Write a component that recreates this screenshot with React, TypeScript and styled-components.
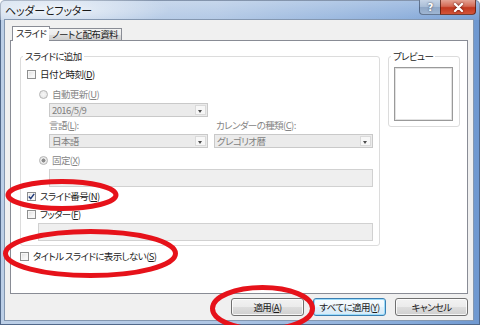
import styled, { createGlobalStyle, css } from "styled-components";

interface CheckProps {
	checked?: boolean;
	disabled?: boolean;
}

function CheckBox({ checked, disabled }: CheckProps) {
	return (
		<Box $disabled={disabled}>
			{checked && (
				<svg width="7" height="7" viewBox="0 0 7 7">
					<path d="M0.8 3.6 L2.7 5.6 L6.2 0.9" fill="none" stroke="#1f3a7a" strokeWidth="1.5" />
				</svg>
			)}
		</Box>
	);
}

function Radio({ checked, disabled }: CheckProps) {
	return <RadioDot $checked={checked} $disabled={disabled} />;
}

function Select({ value }: { value: string }) {
	return (
		<SelectBox>
			<span className="select__value">{value}</span>
			<span className="select__arrow" />
		</SelectBox>
	);
}

export default function App() {
	return (
		<>
			<GlobalStyle />
			<Window>
				<TitleBar>
					<Title>ヘッダーとフッター</Title>
					<Caption>
						<HelpButton>?</HelpButton>
						<CloseButton>
							<svg width="11" height="9" viewBox="0 0 11 9">
								<path d="M2 1 L9 8 M9 1 L2 8" stroke="#fff" strokeWidth="2.2" strokeLinecap="round" />
							</svg>
						</CloseButton>
					</Caption>
				</TitleBar>

				<Client>
					<TabStrip>
						<Tab $active>スライド</Tab>
						<Tab>ノートと配布資料</Tab>
					</TabStrip>

					<Panel>
						<Group>
							<Legend>スライドに追加</Legend>
							<Stack>
								<Row $top={6}>
									<CheckBox />
									<span>
										日付と時刻(<u>D</u>)
									</span>
								</Row>
								<Row $top={8} $indent={12} $disabled>
									<Radio disabled />
									<span>
										自動更新(<u>U</u>)
									</span>
								</Row>
								<DateField>
									<Select value="2016/5/9" />
								</DateField>
								<SelectGrid>
									<FieldLabel>
										言語(<u>L</u>):
									</FieldLabel>
									<FieldLabel $shift={2}>
										カレンダーの種類(<u>C</u>):
									</FieldLabel>
									<Select value="日本語" />
									<Select value="グレゴリオ暦" />
								</SelectGrid>
								<Row $top={6} $indent={12} $disabled>
									<Radio checked disabled />
									<span>
										固定(<u>X</u>)
									</span>
								</Row>
								<TextBox $indent={22} />
								<Row $top={3}>
									<CheckBox checked />
									<span>
										スライド番号(<u>N</u>)
									</span>
								</Row>
								<Row $top={6}>
									<CheckBox />
									<span>
										フッター(<u>F</u>)
									</span>
								</Row>
								<TextBox $indent={11} />
							</Stack>
						</Group>

						<PreviewGroup>
							<Legend $offset={-3}>プレビュー</Legend>
							<PreviewBox />
						</PreviewGroup>

						<TitleSlideRow>
							<CheckBox />
							<span>
								タイトル スライドに表示しない(<u>S</u>)
							</span>
						</TitleSlideRow>
					</Panel>

					<ButtonRow>
						<Button>
							適用(<u>A</u>)
						</Button>
						<Button $default>
							すべてに適用(<u>Y</u>)
						</Button>
						<Button>キャンセル</Button>
					</ButtonRow>
				</Client>

				<Marks width="480" height="333" viewBox="0 0 480 333">
					<ellipse cx="62" cy="195" rx="54" ry="13.5" />
					<ellipse cx="90.5" cy="253.5" rx="85" ry="22" />
					<ellipse cx="262.5" cy="308.5" rx="50" ry="21" />
				</Marks>
			</Window>
		</>
	);
}

const GlobalStyle = createGlobalStyle`
	html, body {
		margin: 0;
		padding: 0;
		background: #fff;
	}

	body {
		font-family: "Noto Sans CJK JP", "Noto Sans", sans-serif;
		font-size: 9.5px;
		letter-spacing: -0.6px;
		color: #1b1b1b;
		font-feature-settings: "palt";
	}

	u {
		text-underline-offset: 1px;
	}
`;

const Window = styled.div`
	position: relative;
	width: 480px;
	height: 325px;
	box-sizing: border-box;
	display: flex;
	flex-direction: column;
	padding: 0 7px 5px 5px;
	background: linear-gradient(90deg, #bccfe7 0%, #afc6e4 45%, #86aad9 85%, #6f98d0 100%);
	box-shadow: inset 0 0 0 1px #51688a;
	border-radius: 5px 5px 0 0;
`;

const TitleBar = styled.div`
	height: 20px;
	margin: 0 -7px 0 -5px;
	padding-left: 5px;
	display: flex;
	align-items: flex-start;
	background:
		radial-gradient(ellipse 120px 20px at 50px 10px, rgba(255, 255, 255, 0.7), rgba(255, 255, 255, 0)),
		linear-gradient(180deg, rgba(255, 255, 255, 0.3), rgba(255, 255, 255, 0.05));
`;

const Title = styled.span`
	font-size: 11px;
	letter-spacing: -0.2px;
	line-height: 20px;
	color: #1a1a1a;
	text-shadow: 0 0 5px #fff;
`;

const Caption = styled.div`
	margin-left: auto;
	margin-right: 4px;
	display: flex;
`;

const HelpButton = styled.div`
	width: 21px;
	height: 15px;
	box-sizing: border-box;
	display: flex;
	align-items: center;
	justify-content: center;
	border: 1px solid rgba(50, 70, 100, 0.65);
	border-top: none;
	border-right: none;
	border-radius: 0 0 0 4px;
	background: linear-gradient(180deg, #c6d4e6 0%, #a9bdd6 50%, #8fa7c6 51%, #9fb6d3 100%);
	color: #fff;
	font-family: "DejaVu Sans", sans-serif;
	font-weight: bold;
	font-size: 10px;
	text-shadow: 0 0 2px #334;
`;

const CloseButton = styled.div`
	width: 36px;
	height: 15px;
	box-sizing: border-box;
	display: flex;
	align-items: center;
	justify-content: center;
	border: 1px solid rgba(70, 20, 10, 0.7);
	border-top: none;
	border-radius: 0 0 4px 0;
	background: linear-gradient(180deg, #e4a394 0%, #d46a55 45%, #c1381f 55%, #d4553a 100%);

	svg {
		filter: drop-shadow(0 0 1px rgba(60, 0, 0, 0.8));
	}
`;

const Client = styled.div`
	flex: 1;
	display: flex;
	flex-direction: column;
	padding: 6px 5px 4px;
	background: #f0f0f0;
	box-shadow: 0 0 0 1px #8497b0;
`;

const TabStrip = styled.div`
	height: 14px;
	display: flex;
	align-items: flex-end;
	padding-left: 2px;
	position: relative;
	z-index: 1;
`;

const Tab = styled.div<{ $active?: boolean }>`
	box-sizing: border-box;
	padding: 0 3px;
	border: 1px solid #898c95;
	border-bottom: none;
	line-height: 11px;
	white-space: nowrap;
	${p =>
		p.$active
			? css`
					height: 15px;
					margin-bottom: -1px;
					padding-top: 1px;
					background: #fff;
			  `
			: css`
					height: 12px;
					margin-left: -1px;
					border-left: none;
					background: linear-gradient(180deg, #f3f3f3 0%, #ebebeb 50%, #dddddd 51%, #cfcfcf 100%);
			  `}
`;

const Panel = styled.div`
	height: 254px;
	box-sizing: border-box;
	border: 1px solid #898c95;
	background: #fff;
	display: grid;
	grid-template-columns: 360px 72px;
	column-gap: 8px;
	align-content: start;
	align-items: start;
	padding: 9px 7px 0 9px;
`;

const Group = styled.fieldset`
	margin: 0;
	padding: 0 6px 4px;
	min-width: 0;
	border: 1px solid #dcdcdc;
	border-radius: 3px;
`;

const PreviewGroup = styled(Group)`
	padding: 0 6px 5px 5px;
`;

const Legend = styled.legend<{ $offset?: number }>`
	padding: 0 2px;
	margin-left: ${p => p.$offset ?? -4}px;
	line-height: 12px;
	color: #1b1b1b;
`;

const Stack = styled.div`
	display: flex;
	flex-direction: column;
`;

const Row = styled.div<{ $top?: number; $indent?: number; $disabled?: boolean }>`
	height: 12px;
	margin-top: ${p => p.$top ?? 0}px;
	margin-left: ${p => p.$indent ?? 0}px;
	display: flex;
	align-items: center;
	gap: 4px;
	line-height: 12px;
	white-space: nowrap;
	color: ${p => (p.$disabled ? "#858585" : "#1b1b1b")};
`;

const TitleSlideRow = styled(Row)`
	grid-column: 1 / -1;
	margin-top: 4px;
`;

const Box = styled.span<{ $disabled?: boolean }>`
	width: 9px;
	height: 9px;
	box-sizing: border-box;
	flex: none;
	display: flex;
	align-items: center;
	justify-content: center;
	border: 1px solid #8e8f8f;
	background: linear-gradient(135deg, #dcdcdc 0%, #f4f4f4 60%, #ffffff 100%);
	box-shadow: inset 0 0 0 1px #f6f6f6;
`;

const RadioDot = styled.span<{ $checked?: boolean; $disabled?: boolean }>`
	width: 9px;
	height: 9px;
	box-sizing: border-box;
	flex: none;
	border-radius: 50%;
	border: 1px solid #b3b3b3;
	background: ${p =>
		p.$checked
			? "radial-gradient(circle, #8c8c8c 0 1.8px, #e6e6e6 2.2px, #f4f4f4 100%)"
			: "radial-gradient(circle, #f7f7f7 0%, #e2e2e2 100%)"};
`;

const SelectBox = styled.div`
	height: 14px;
	box-sizing: border-box;
	display: flex;
	align-items: stretch;
	border: 1px solid #c9c9c9;
	background: #ebebeb;
	color: #7f7f7f;

	.select__value {
		flex: 1;
		padding-left: 2px;
		line-height: 12px;
		white-space: nowrap;
	}

	.select__arrow {
		width: 11px;
		margin: 1px;
		background: #f7f7f7;
		border: 1px solid #dadada;
		box-sizing: border-box;
		position: relative;

		&::after {
			content: "";
			position: absolute;
			left: 2px;
			top: 4px;
			border-left: 2.5px solid transparent;
			border-right: 2.5px solid transparent;
			border-top: 3px solid #4d4d4d;
		}
	}
`;

const DateField = styled.div`
	width: 159px;
	margin: 3px 0 0 22px;
`;

const SelectGrid = styled.div`
	margin: 2px 0 0 22px;
	display: grid;
	grid-template-columns: 159px 1fr;
	column-gap: 6px;
	row-gap: 3px;
`;

const FieldLabel = styled.span<{ $shift?: number }>`
	line-height: 12px;
	padding-left: ${p => p.$shift ?? 0}px;
	color: #858585;
	white-space: nowrap;
`;

const TextBox = styled.div<{ $indent: number }>`
	height: 18px;
	margin: 3px 0 0 ${p => p.$indent}px;
	box-sizing: border-box;
	border: 1px solid #d1d1d1;
	background: #efefef;
`;

const PreviewBox = styled.div`
	width: 59px;
	height: 54px;
	margin-top: 5px;
	box-sizing: border-box;
	border: 1px solid #9a9a9a;
	box-shadow: inset 0 0 0 1px #e2e2e2;
	background: #fff;
`;

const ButtonRow = styled.div`
	margin-top: 4px;
	display: flex;
	justify-content: flex-end;
	gap: 9px;
`;

const Button = styled.div<{ $default?: boolean }>`
	width: 73px;
	height: 18px;
	box-sizing: border-box;
	display: flex;
	align-items: center;
	justify-content: center;
	border-radius: 3px;
	white-space: nowrap;
	border: 1px solid ${p => (p.$default ? "#3c7fb1" : "#707070")};
	background: ${p =>
		p.$default
			? "linear-gradient(180deg, #f8fcfe 0%, #eef7fd 50%, #e1f0fa 51%, #d6eaf7 100%)"
			: "linear-gradient(180deg, #f2f2f2 0%, #ebebeb 50%, #dddddd 51%, #cfcfcf 100%)"};
	box-shadow: inset 0 0 0 1px ${p => (p.$default ? "#9bdcfb" : "rgba(255, 255, 255, 0.8)")};
`;

const Marks = styled.svg`
	position: absolute;
	left: 0;
	top: 0;
	overflow: visible;
	pointer-events: none;

	ellipse {
		fill: none;
		stroke: #e6121a;
		stroke-width: 5;
	}
`;
